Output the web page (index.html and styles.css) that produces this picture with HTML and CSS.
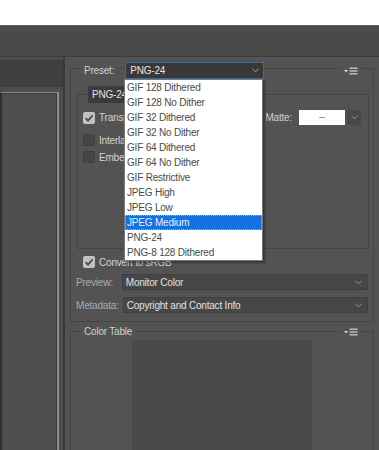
FILE: index.html
```html
<!DOCTYPE html>
<html>
<head>
<meta charset="utf-8">
<link rel="stylesheet" href="styles.css">
</head>
<body>
<div class="top-space"></div>
<div class="toolbar"></div>
<div class="main">
  <div class="left">
    <div class="left-head"></div>
    <div class="left-frame"><div class="left-inner"></div></div>
  </div>
  <div class="divider"></div>
  <div class="right">
    <div class="group outer">
      <div class="group-head">
        <span class="legend">Preset:</span>
        <div class="preset-select">
          <span>PNG-24</span>
          <svg class="chev" width="7" height="5" viewBox="0 0 7 5"><polyline points="0.5,0.8 3.5,3.8 6.5,0.8" fill="none" stroke="#a8a8a8" stroke-width="1"/></svg>
        </div>
        <span class="spacer"></span>
        <span class="menu-icon">
          <svg width="14" height="8" viewBox="0 0 14 8"><polygon points="0,3 4,3 2,5.5" fill="#d8d8d8"/><rect x="5.5" y="0.5" width="8" height="1.4" fill="#c4c4c4"/><rect x="5.5" y="3.3" width="8" height="1.4" fill="#c4c4c4"/><rect x="5.5" y="6.1" width="8" height="1.4" fill="#c4c4c4"/></svg>
        </span>
      </div>
      <div class="group inner">
        <div class="inner-head">
          <div class="tab">PNG-24</div>
        </div>
        <div class="row row-trans">
          <span class="cb checked"><svg width="12" height="12" viewBox="0 0 12 12"><path d="M2.6 6.2 L5 8.6 L9.6 3.4" fill="none" stroke="#4a4a4a" stroke-width="1.8"/></svg></span>
          <span class="cb-label">Transparency</span>
          <span class="spacer"></span>
          <span class="matte-label">Matte:</span>
          <span class="matte-box">–</span>
          <span class="matte-chev"><svg width="7" height="5" viewBox="0 0 7 5"><polyline points="0.5,0.8 3.5,3.8 6.5,0.8" fill="none" stroke="#9a9a9a" stroke-width="1"/></svg></span>
        </div>
        <div class="row row-inter">
          <span class="cb"></span>
          <span class="cb-label">Interlaced</span>
        </div>
        <div class="row row-embed">
          <span class="cb"></span>
          <span class="cb-label">Embed Color Profile</span>
        </div>
      </div>
      <div class="row row-convert">
        <span class="cb checked"><svg width="12" height="12" viewBox="0 0 12 12"><path d="M2.6 6.2 L5 8.6 L9.6 3.4" fill="none" stroke="#4a4a4a" stroke-width="1.8"/></svg></span>
        <span class="cb-label">Convert to sRGB</span>
      </div>
      <div class="field row-preview">
        <span class="field-label">Preview:</span>
        <div class="select sel-preview">
          <span>Monitor Color</span>
          <svg class="chev" width="7" height="5" viewBox="0 0 7 5"><polyline points="0.5,0.8 3.5,3.8 6.5,0.8" fill="none" stroke="#9a9a9a" stroke-width="1"/></svg>
        </div>
      </div>
      <div class="field row-meta">
        <span class="field-label">Metadata:</span>
        <div class="select sel-meta">
          <span>Copyright and Contact Info</span>
          <svg class="chev" width="7" height="5" viewBox="0 0 7 5"><polyline points="0.5,0.8 3.5,3.8 6.5,0.8" fill="none" stroke="#9a9a9a" stroke-width="1"/></svg>
        </div>
      </div>
    </div>
    <div class="group color-table">
      <div class="group-head ct-head">
        <span class="legend">Color Table</span>
        <span class="spacer"></span>
        <span class="menu-icon">
          <svg width="14" height="8" viewBox="0 0 14 8"><polygon points="0,3 4,3 2,5.5" fill="#d8d8d8"/><rect x="5.5" y="0.5" width="8" height="1.4" fill="#c4c4c4"/><rect x="5.5" y="3.3" width="8" height="1.4" fill="#c4c4c4"/><rect x="5.5" y="6.1" width="8" height="1.4" fill="#c4c4c4"/></svg>
        </span>
      </div>
      <div class="swatches"></div>
    </div>
  </div>
</div>
<ul class="dropdown">
  <li>GIF 128 Dithered</li>
  <li>GIF 128 No Dither</li>
  <li>GIF 32 Dithered</li>
  <li>GIF 32 No Dither</li>
  <li>GIF 64 Dithered</li>
  <li>GIF 64 No Dither</li>
  <li>GIF Restrictive</li>
  <li>JPEG High</li>
  <li>JPEG Low</li>
  <li class="active">JPEG Medium</li>
  <li>PNG-24</li>
  <li>PNG-8 128 Dithered</li>
</ul>
</body>
</html>
```

FILE: styles.css
```css
* { box-sizing: border-box; }
html, body { margin: 0; padding: 0; }
body {
  width: 379px;
  height: 450px;
  overflow: hidden;
  background: #ffffff;
  font-family: "Liberation Sans", Arial, sans-serif;
  font-size: 10px;
  letter-spacing: -0.2px;
  position: relative;
}
.top-space { height: 25px; background: #ffffff; }
.toolbar {
  height: 32px;
  background: #4a4a4a;
  border-top: 1px solid #606060;
  border-bottom: 1px solid #3c3c3c;
}
.main { display: flex; height: 393px; overflow: hidden; }
.left {
  width: 63px;
  background: #4d4d4d;
  display: flex;
  flex-direction: column;
  padding-top: 3px;
}
.left-head { height: 27px; background: #3f3f3f; }
.left-frame {
  flex: 1;
  margin-top: 5px;
  margin-right: 4px;
  border-top: 1px solid #8a8a8a;
  border-right: 2px solid #8e8e8e;
  border-left: 2px solid #2c2f36;
}
.left-inner {
  height: 100%;
  border-top: 1px solid #3a3a3a;
  border-right: 1px solid #3a3a3a;
  background: #4e4e4e;
}
.divider { width: 2px; background: #393939; }
.right {
  flex: 1;
  background: #535353;
  padding: 11px 5px 0 5px;
  overflow: hidden;
}
.group { border: 1px solid #454545; }
.group-head {
  display: flex;
  align-items: center;
  height: 17px;
  margin-top: -7px;
  padding: 0 12px 0 10px;
}
.legend {
  background: #535353;
  color: #cfcfcf;
  padding: 0 4px 0 3px;
  line-height: 14px;
}
.spacer { flex: 1; }
.preset-select {
  margin-left: 7px;
  width: 139px;
  height: 17px;
  background: #383838;
  border: 1px solid #3a6aa6;
  display: flex;
  align-items: center;
  justify-content: space-between;
  padding: 0 4px 0 4px;
  color: #e6e6e6;
}
.chev { display: block; }
.menu-icon {
  background: #535353;
  padding: 0 3px;
  display: flex;
  align-items: center;
  height: 10px;
}
.inner {
  margin: 15px 4px 0 6px;
  height: 155px;
  background: #535353;
}
.inner-head {
  display: flex;
  height: 17px;
  margin-top: -9px;
  padding-left: 10px;
}
.tab {
  background: #3b3b3b;
  color: #e2e2e2;
  padding: 0 6px 0 4px;
  line-height: 17px;
  width: 70px;
}
.row {
  display: flex;
  align-items: center;
  padding-left: 5px;
}
.row-trans { height: 15px; margin-top: 7px; padding-right: 7px; }
.row-inter { height: 12px; margin-top: 9px; }
.row-embed { height: 12px; margin-top: 5px; }
.cb {
  width: 12px;
  height: 12px;
  border-radius: 2px;
  background: #464646;
  border: 1px solid #3e3e3e;
  flex: none;
  display: flex;
}
.cb.checked {
  background: #c2c2c2;
  border: none;
}
.cb-label { color: #d4d4d4; margin-left: 4px; }
.matte-label { color: #cfcfcf; margin-right: 7px; }
.matte-box {
  width: 46px;
  height: 15px;
  background: #ffffff;
  color: #777777;
  text-align: center;
  line-height: 14px;
}
.matte-chev {
  width: 14px;
  height: 15px;
  margin-left: 2px;
  background: #484848;
  display: flex;
  align-items: center;
  justify-content: center;
}
.row-convert { height: 12px; margin-top: 7px; padding-left: 12px; }
.field {
  display: flex;
  align-items: center;
  height: 16px;
  padding-left: 5px;
  margin-right: 5px;
}
.row-preview { margin-top: 6px; }
.row-meta { margin-top: 7px; margin-bottom: 8px; }
.field-label { color: #ababab; }
.select {
  height: 16px;
  background: #474747;
  border: 1px solid #404040;
  display: flex;
  align-items: center;
  justify-content: space-between;
  padding: 0 5px 0 3px;
  color: #e2e2e2;
}
.sel-preview { margin-left: 9px; flex: 1; }
.sel-meta { margin-left: 4px; flex: 1; }
.color-table {
  margin-top: 9px;
  height: 130px;
  border-bottom: none;
}
.ct-head { height: 15px; margin-top: -8px; }
.swatches {
  margin: 1px 0 0 61px;
  width: 180px;
  height: 110px;
  background: #4a4a4a;
  border: 1px solid #464646;
  border-bottom: none;
}
.dropdown {
  position: absolute;
  left: 124px;
  top: 79px;
  width: 139px;
  margin: 0;
  padding: 0;
  list-style: none;
  background: #ffffff;
  border: 1px solid #7a7a7a;
  box-shadow: 2px 2px 2px rgba(0,0,0,0.35);
}
.dropdown li {
  height: 15px;
  line-height: 15px;
  padding-left: 2px;
  color: #4a4a4a;
  white-space: nowrap;
}
.dropdown li.active {
  background: #1571e2;
  color: #e4eeff;
  outline: 1px dotted #9cbcec;
  outline-offset: -1px;
}
```
